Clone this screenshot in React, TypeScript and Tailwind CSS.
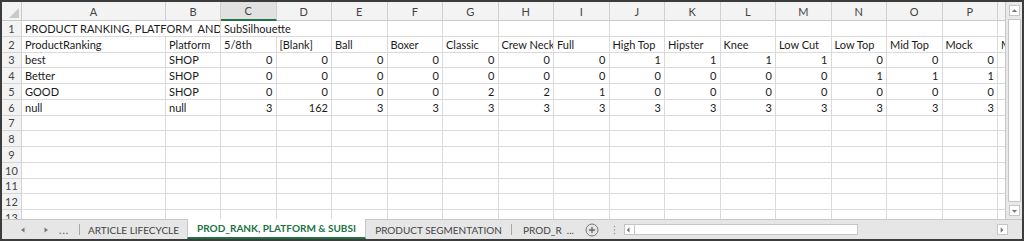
const COLS = ['A', 'B', 'C', 'D', 'E', 'F', 'G', 'H', 'I', 'J', 'K', 'L', 'M', 'N', 'O', 'P', 'Q'];

const WIDTH_CLASS: Record<string, string> = {
  A: 'w-[144px]',
  B: 'w-[55px]',
};

function colWidth(c: string) {
  if (WIDTH_CLASS[c]) return WIDTH_CLASS[c];
  if (c === 'Q') return 'w-[60px]';
  return 'w-[55.5px]';
}

const ROWS: string[][] = [
  ['ProductRanking', 'Platform', '5/8th', '[Blank]', 'Ball', 'Boxer', 'Classic', 'Crew Neck', 'Full', 'High Top', 'Hipster', 'Knee', 'Low Cut', 'Low Top', 'Mid Top', 'Mock', 'Mod'],
  ['best', 'SHOP', '0', '0', '0', '0', '0', '0', '0', '1', '1', '1', '1', '0', '0', '0', ''],
  ['Better', 'SHOP', '0', '0', '0', '0', '0', '0', '0', '0', '0', '0', '0', '1', '1', '1', ''],
  ['GOOD', 'SHOP', '0', '0', '0', '0', '2', '2', '1', '0', '0', '0', '0', '0', '0', '0', ''],
  ['null', 'null', '3', '162', '3', '3', '3', '3', '3', '3', '3', '3', '3', '3', '3', '3', ''],
];

const isNum = (v: string) => /^\d+$/.test(v);

function RowHead({ n }: { n: number }) {
  return (
    <div className="w-[20px] shrink-0 h-full flex items-center justify-center bg-[#f3f3f3] border-r border-b border-[#d4d4d4] text-[#444]">
      {n}
    </div>
  );
}

function Cell({ col, value }: { col: string; value: string }) {
  return (
    <div
      className={`${colWidth(col)} shrink-0 h-full border-r border-b border-[#dadada] overflow-hidden whitespace-nowrap px-[3px] flex items-center ${
        isNum(value) ? 'justify-end' : 'justify-start'
      }`}
    >
      {value}
    </div>
  );
}

function ArrowBox({ dir }: { dir: 'left' | 'right' | 'up' | 'down' }) {
  const pts = {
    left: '5,2 5,8 2,5',
    right: '3,2 3,8 6,5',
    up: '2,6 8,6 5,3',
    down: '2,4 8,4 5,7',
  }[dir];
  return (
    <div className="w-[11px] h-[11px] bg-white border border-[#c6c6c6] flex items-center justify-center shrink-0">
      <svg width="10" height="10" viewBox="0 0 10 10">
        <polygon points={pts} fill="#777" />
      </svg>
    </div>
  );
}

export default function App() {
  return (
    <div className="w-[1024px] h-[241px] bg-[#3c3c3c] pt-[2px] pl-[2px] pr-[2px] pb-[2px] font-[Lato,'Liberation_Sans',sans-serif] text-[11px] text-[#1a1a1a] leading-none">
      <div className="w-full h-full flex flex-col bg-white">
        {/* sheet area */}
        <div className="flex h-[217px] shrink-0">
          <div className="w-[1003px] overflow-hidden flex flex-col">
            {/* column letters */}
            <div className="flex h-[19px] shrink-0 text-[#444]">
              <div className="w-[20px] shrink-0 bg-[#f3f3f3] border-r border-b border-[#c8c8c8] relative">
                <svg className="absolute right-[2px] bottom-[2px]" width="10" height="10" viewBox="0 0 10 10">
                  <polygon points="10,0 10,10 0,10" fill="#c9c9c9" />
                </svg>
              </div>
              {COLS.map((c) => (
                <div
                  key={c}
                  className={`${colWidth(c)} shrink-0 flex items-center justify-center ${
                    c === 'C'
                      ? 'bg-[#e1e1e1] border-r border-[#d0d0d0] border-b-2 border-b-[#217346]'
                      : 'bg-[#f3f3f3] border-r border-b border-[#d0d0d0] border-b-[#c8c8c8]'
                  }`}
                >
                  {c}
                </div>
              ))}
            </div>

            {/* row 1 */}
            <div className="flex h-[15.75px] shrink-0">
              <RowHead n={1} />
              <div className="w-[199px] shrink-0 h-full border-r border-b border-[#dadada] overflow-hidden whitespace-pre px-[3px] flex items-center">
                PRODUCT RANKING, PLATFORM  AND SUBSILHOUETTE
              </div>
              <div className="w-[111px] shrink-0 h-full border-r border-b border-[#dadada] overflow-hidden whitespace-nowrap px-[3px] flex items-center">
                SubSilhouette
              </div>
              {COLS.slice(4).map((c) => (
                <Cell key={c} col={c} value="" />
              ))}
            </div>

            {ROWS.map((row, i) => (
              <div key={i} className="flex h-[15.75px] shrink-0">
                <RowHead n={i + 2} />
                {COLS.map((c, j) => (
                  <Cell key={c} col={c} value={row[j]} />
                ))}
              </div>
            ))}

            {[7, 8, 9, 10, 11, 12, 13].map((n) => (
              <div key={n} className="flex h-[15.75px] shrink-0">
                <RowHead n={n} />
                {COLS.map((c) => (
                  <Cell key={c} col={c} value="" />
                ))}
              </div>
            ))}
          </div>

          {/* vertical scrollbar */}
          <div className="flex-1 bg-[#e8e8e8] border-l border-[#c6c6c6] flex flex-col items-center pt-[3px] pb-[3px] gap-[3px]">
            <ArrowBox dir="up" />
            <div className="w-[13px] flex-1 bg-white border border-[#c6c6c6]" />
            <ArrowBox dir="down" />
          </div>
        </div>

        {/* sheet tabs */}
        <div className="flex-1 bg-[#e6e6e6] border-t border-[#c6c6c6] flex items-stretch text-[10px] text-[#444]">
          <div className="w-[77px] shrink-0 flex items-center text-[#666]">
            <svg className="ml-[17px]" width="8" height="8" viewBox="0 0 8 8">
              <polygon points="5.5,1.5 5.5,6.5 2,4" fill="#777" />
            </svg>
            <svg className="ml-[15px]" width="8" height="8" viewBox="0 0 8 8">
              <polygon points="2.5,1.5 2.5,6.5 6,4" fill="#777" />
            </svg>
            <span className="ml-[9px] tracking-[1px] font-bold">...</span>
          </div>
          <div className="w-px shrink-0 my-[4px] bg-[#a8a8a8]" />
          <div className="w-[107px] shrink-0 flex items-center justify-center">ARTICLE LIFECYCLE</div>
          <div className="w-[179px] shrink-0 -mt-px bg-white border-x border-[#c6c6c6] border-b-2 border-b-[#217346] flex items-center justify-center font-bold text-[#217346]">
            PROD_RANK, PLATFORM &amp; SUBSI
          </div>
          <div className="w-[145px] shrink-0 flex items-center justify-center">PRODUCT SEGMENTATION</div>
          <div className="w-px shrink-0 my-[4px] bg-[#a8a8a8]" />
          <div className="w-[68px] shrink-0 flex items-center pl-[11px] whitespace-pre">PROD_R  ...</div>
          <div className="w-[24px] shrink-0 flex items-center justify-center">
            <svg width="14" height="14" viewBox="0 0 14 14">
              <circle cx="7" cy="7" r="6" fill="none" stroke="#777" strokeWidth="1" />
              <path d="M7 4v6M4 7h6" stroke="#666" strokeWidth="1.3" />
            </svg>
          </div>
          <div className="w-[20px] shrink-0 flex items-center justify-center">
            <svg width="3" height="10" viewBox="0 0 3 10">
              <circle cx="1.5" cy="1.5" r="0.8" fill="#999" />
              <circle cx="1.5" cy="5" r="0.8" fill="#999" />
              <circle cx="1.5" cy="8.5" r="0.8" fill="#999" />
            </svg>
          </div>
          <div className="flex-1 flex items-center pr-[14px]">
            <ArrowBox dir="left" />
            <div className="w-[223px] h-[11px] bg-white border-y border-r border-[#c6c6c6]" />
            <div className="flex-1" />
            <ArrowBox dir="right" />
          </div>
        </div>
      </div>
    </div>
  );
}
